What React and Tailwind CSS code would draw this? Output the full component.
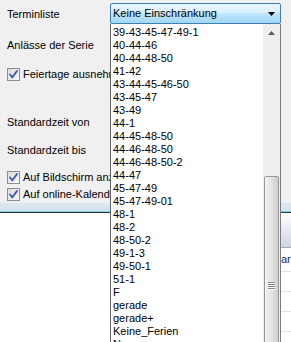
import React from 'react';

const eintraege = [
    '39-43-45-47-49-1', '40-44-46', '40-44-48-50', '41-42', '43-44-45-46-50', '43-45-47', '43-49',
    '44-1', '44-45-48-50', '44-46-48-50', '44-46-48-50-2', '44-47', '45-47-49', '45-47-49-01',
    '48-1', '48-2', '48-50-2', '49-1-3', '49-50-1', '51-1', 'F', 'gerade', 'gerade+', 'Keine_Ferien', 'N'
];

// Checkbox im Windows-7-Stil
function Haken() {
    return (
        <span className="w-[13px] h-[13px] shrink-0 border border-[#8e8f8f] bg-[linear-gradient(135deg,#d9dde4,#f7f8fa)] flex items-center justify-center">
            <svg width="11" height="11" viewBox="0 0 11 11">
                <path d="M2 5.5 L4.4 8.3 L9 2" fill="none" stroke="#3b5ca3" strokeWidth="1.9" strokeLinecap="round" strokeLinejoin="round" />
            </svg>
        </span>
    );
}

function App() {
    return (
        <div className="relative w-[291px] h-[342px] overflow-hidden bg-white text-black text-[11px] leading-[13px] font-['Liberation_Sans',Arial,sans-serif]">
            <div className="flex flex-col h-full">
                {/* Dialog */}
                <div className="h-[203px] bg-[#f0f0f0] px-[7px] pt-[8px] flex flex-col whitespace-nowrap">
                    <div>Terminliste</div>
                    <div className="mt-[18px]">Anlässe der Serie</div>
                    <div className="mt-[16px] flex items-center gap-[3px]">
                        <Haken />
                        <span>Feiertage ausnehmen</span>
                    </div>
                    <div className="mt-[35px]">Standardzeit von</div>
                    <div className="mt-[15px]">Standardzeit bis</div>
                    <div className="mt-[14px] flex items-center gap-[3px]">
                        <Haken />
                        <span>Auf Bildschirm anzeigen</span>
                    </div>
                    <div className="mt-[4px] flex items-center gap-[3px]">
                        <Haken />
                        <span>Auf online-Kalender</span>
                    </div>
                </div>

                {/* Leiste */}
                <div className="h-[8px] bg-[linear-gradient(to_bottom,#dfe8f1,#d2e2f0)]" />
                <div className="h-px bg-[#86cdea]" />
                <div className="h-px bg-[#28343e]" />

                {/* Tabelle dahinter */}
                <div className="flex-1 flex">
                    <div className="flex-1 bg-white" />
                    <div className="w-[10px] flex flex-col overflow-hidden">
                        <div className="h-[35px] bg-[linear-gradient(to_bottom,#ffffff,#eceef5_40%,#d1d4e4)] border-b border-[#a9abbb]" />
                        <div className="h-[24px] border-b border-[#e2e2e2] flex items-center text-[#1c1c70]">ar</div>
                        <div className="h-[20px] border-b border-[#e2e2e2]" />
                        <div className="h-[20px] border-b border-[#e2e2e2]" />
                        <div className="h-[20px] border-b border-[#e2e2e2]" />
                    </div>
                </div>
            </div>

            {/* Aufgeklappte Combobox */}
            <div className="absolute left-[110px] top-[3px] w-[171px] flex flex-col">
                <div className="h-[21px] rounded-[2px] border border-[#3c7fb1] bg-[linear-gradient(to_bottom,#eaf6fd_0%,#d9f0fc_45%,#bee6fd_50%,#a2d6f4_100%)] flex items-center pl-[2px] pr-[5px]">
                    <span className="flex-1">Keine Einschränkung</span>
                    <svg width="7" height="4" viewBox="0 0 7 4">
                        <polygon points="0,0 7,0 3.5,4" fill="#000" />
                    </svg>
                </div>
                <div className="h-[330px] bg-white border-l border-[#646464] border-r border-r-[#7c7c7c] flex">
                    <div className="flex-1 pl-[2px] pt-[2px] overflow-hidden whitespace-nowrap">
                        {eintraege.map((e) => (
                            <div key={e} className="h-[13px]">{e}</div>
                        ))}
                    </div>
                    <div className="w-[17px] bg-[#eeeeee] flex flex-col items-center">
                        <div className="h-[17px] w-full flex items-center justify-center pt-[1px]">
                            <svg width="7" height="4" viewBox="0 0 7 4">
                                <polygon points="3.5,0 7,4 0,4" fill="#5c5c5c" />
                            </svg>
                        </div>
                        <div className="mt-[135px] w-[15px] flex-1 rounded-t-[2px] border border-[#979797] bg-[linear-gradient(to_right,#f4f4f4,#e3e3e3_50%,#cdcdcd)] flex flex-col items-center pt-[105px] gap-px">
                            <div className="w-[7px] h-px bg-[#8a8a8a] shadow-[0_1px_0_#ffffff]" />
                            <div className="w-[7px] h-px bg-[#8a8a8a] shadow-[0_1px_0_#ffffff]" />
                            <div className="w-[7px] h-px bg-[#8a8a8a] shadow-[0_1px_0_#ffffff]" />
                            <div className="w-[7px] h-px bg-[#8a8a8a] shadow-[0_1px_0_#ffffff]" />
                        </div>
                    </div>
                </div>
            </div>
        </div>
    );
}

export default App;
